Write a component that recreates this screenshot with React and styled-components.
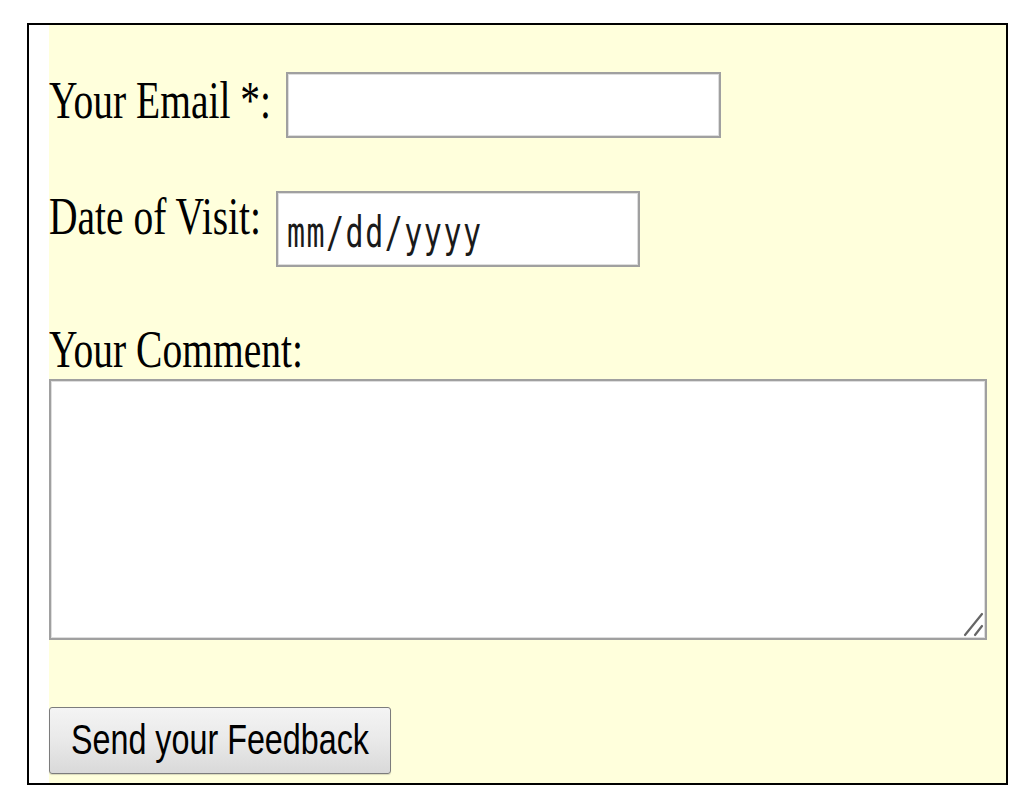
import React from "react";
import styled, { createGlobalStyle } from "styled-components";

const GlobalStyle = createGlobalStyle`
  html, body {
    margin: 0;
    padding: 0;
    background: #ffffff;
  }
`;

const Frame = styled.div`
  box-sizing: border-box;
  width: 981px;
  height: 762px;
  margin: 23px 0 0 27px;
  padding-left: 20px;
  border: 2px solid #000000;
  background: #ffffff;
  display: flex;
`;

const Panel = styled.form`
  flex: 1;
  background: #ffffdc;
  padding-top: 47px;
  display: flex;
  flex-direction: column;
  align-items: flex-start;
`;

const Row = styled.div`
  display: flex;
  align-items: center;
  gap: ${(p) => p.$gap}px;
  margin-bottom: ${(p) => p.$space}px;
`;

const Label = styled.label`
  display: inline-block;
  font-family: "Liberation Serif", "Times New Roman", serif;
  font-size: 39.5px;
  line-height: 40px;
  color: #000000;
  white-space: nowrap;
  transform: translateY(${(p) => p.$lift || 0}px) scaleY(1.36);
`;

const BlockLabel = styled(Label)`
  margin-bottom: 10px;
`;

const EmailInput = styled.input`
  box-sizing: border-box;
  width: 435px;
  height: 66px;
  margin: 0;
  border: 2px solid #a0a0a0;
  box-shadow: inset 0 0 0 1px #dedede;
  background: #ffffff;
  outline: none;
`;

const DateBox = styled.div`
  box-sizing: border-box;
  width: 364px;
  height: 76px;
  padding-left: 9px;
  border: 2px solid #a0a0a0;
  box-shadow: inset 0 0 0 1px #dedede;
  background: #ffffff;
  display: flex;
  align-items: center;
  overflow: hidden;
`;

const DateInput = styled.input`
  width: 100%;
  height: 36px;
  margin: 0;
  padding: 0;
  border: none;
  outline: none;
  background: transparent;
  font-family: "DejaVu Sans Mono", "Liberation Mono", monospace;
  font-size: 30px;
  letter-spacing: 1.5px;
  color: #1a1a1a;
  transform: translateY(3px) scaleY(1.4);

  &::placeholder {
    color: #1a1a1a;
    opacity: 1;
  }
`;

const CommentBox = styled.div`
  position: relative;
  margin-bottom: 67px;
`;

const Comment = styled.textarea`
  display: block;
  box-sizing: border-box;
  width: 938px;
  height: 261px;
  margin: 0;
  border: 2px solid #a0a0a0;
  box-shadow: inset 0 0 0 1px #dedede;
  background: #ffffff;
  outline: none;
`;

const Grip = styled.svg`
  position: absolute;
  right: 3px;
  bottom: 3px;
  width: 22px;
  height: 25px;
  background: #ffffff;
  pointer-events: none;
`;

const SendButton = styled.button`
  box-sizing: border-box;
  width: 342px;
  height: 67px;
  padding: 0;
  border: 1px solid #7c7c7c;
  border-radius: 3px;
  background: linear-gradient(#f4f4f4 0%, #e9e9e9 50%, #d9d9d9 100%);
  box-shadow: 0 1px 1px rgba(0, 0, 0, 0.15);
  font-family: "Liberation Sans", Arial, sans-serif;
  font-size: 32.3px;
  color: #000000;
  cursor: pointer;
`;

const ButtonText = styled.span`
  display: inline-block;
  transform: scaleY(1.3);
`;

export default function App() {
  return (
    <>
      <GlobalStyle />
      <Frame>
        <Panel onSubmit={(e) => e.preventDefault()}>
          <Row $gap={15} $space={53}>
            <Label htmlFor="email" $lift={-5}>
              Your Email *:
            </Label>
            <EmailInput id="email" type="email" />
          </Row>
          <Row $gap={15} $space={62}>
            <Label htmlFor="visit" $lift={-13}>
              Date of Visit:
            </Label>
            <DateBox>
              <DateInput id="visit" type="text" placeholder="mm/dd/yyyy" />
            </DateBox>
          </Row>
          <BlockLabel htmlFor="comment">Your Comment:</BlockLabel>
          <CommentBox>
            <Comment id="comment" />
            <Grip viewBox="0 0 22 25">
              <path d="M3 23 L20 2 M13 23 L20 14" stroke="#666666" strokeWidth="2.2" strokeLinecap="round" fill="none" />
            </Grip>
          </CommentBox>
          <SendButton type="submit">
            <ButtonText>Send your Feedback</ButtonText>
          </SendButton>
        </Panel>
      </Frame>
    </>
  );
}
